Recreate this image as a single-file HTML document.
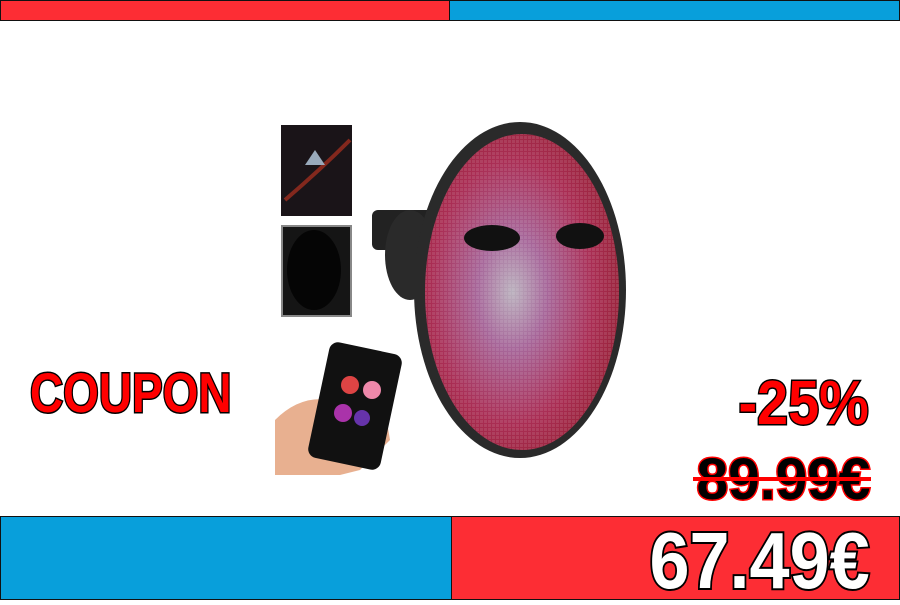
<!DOCTYPE html>
<html><head><style>
body{margin:0;width:900px;height:600px;background:#fff;position:relative;overflow:hidden;font-family:"Liberation Sans",sans-serif}
.b{position:absolute;box-sizing:border-box;border:1px solid #111}
.t{position:absolute;font-weight:bold;white-space:nowrap;line-height:1;paint-order:stroke fill}
</style></head><body>
<div class="b" style="left:0;top:0;width:450px;height:21px;background:#fd2d34"></div>
<div class="b" style="left:449px;top:0;width:451px;height:21px;background:#089fdb"></div>
<div class="b" style="left:0;top:516px;width:452px;height:84px;background:#089fdb"></div>
<div class="b" style="left:451px;top:516px;width:449px;height:84px;background:#fd2d34"></div>

<svg style="position:absolute;left:0;top:0" width="900" height="600">
<defs>
<pattern id="dots" width="4" height="4" patternUnits="userSpaceOnUse"><rect width="4" height="4" fill="#222" opacity=".2"/><rect width="3" height="3" fill="#fff" opacity=".1"/></pattern>
<radialGradient id="g" cx="0.45" cy="0.5" r="0.6"><stop offset="0" stop-color="#e0d4e4"/><stop offset="0.3" stop-color="#c878b8"/><stop offset="0.7" stop-color="#cc3060"/><stop offset="1" stop-color="#b02038"/></radialGradient>
</defs>
<rect x="281" y="125" width="71" height="91" fill="#1a1418"/>
<path d="M285 200 Q320 170 350 140" stroke="#b03020" stroke-width="4" fill="none" opacity=".7"/>
<path d="M305 165 L315 150 L325 165 Z" fill="#9ab"/>
<rect x="281" y="225" width="71" height="92" fill="#888"/>
<rect x="283" y="227" width="67" height="88" fill="#151515"/>
<ellipse cx="314" cy="270" rx="27" ry="40" fill="#050505"/>
<rect x="372" y="210" width="70" height="40" rx="6" fill="#222"/>
<ellipse cx="410" cy="255" rx="25" ry="45" fill="#2a2a2a"/>
<ellipse cx="520" cy="290" rx="106" ry="168" fill="#2a2a2a"/>
<ellipse cx="522" cy="292" rx="97" ry="158" fill="url(#g)"/>
<ellipse cx="522" cy="292" rx="97" ry="158" fill="url(#dots)"/>
<ellipse cx="492" cy="238" rx="28" ry="13" fill="#111"/>
<ellipse cx="580" cy="236" rx="24" ry="13" fill="#111"/>
<path d="M275 475 L275 420 Q300 395 330 400 L385 410 L390 440 L360 470 L340 475 Z" fill="#e8b090"/>
<rect x="318" y="347" width="74" height="118" rx="9" fill="#111" transform="rotate(12 355 406)"/>
<circle cx="350" cy="385" r="9" fill="#d44"/><circle cx="372" cy="390" r="9" fill="#e8a"/>
<circle cx="343" cy="413" r="9" fill="#a3a"/><circle cx="362" cy="418" r="8" fill="#63a"/>
</svg>

<div class="t" style="left:30px;top:365px;font-size:56px;color:#f00;-webkit-text-stroke:3px #000;transform:scaleX(.82);transform-origin:left">COUPON</div>
<div class="t" style="right:31px;top:373px;font-size:62px;color:#f00;-webkit-text-stroke:3px #000;transform:scaleX(.9);transform-origin:right">-25%</div>
<div class="t" style="right:30px;top:451px;font-size:58px;color:#000;-webkit-text-stroke:3px #f00;transform:scaleX(.98);transform-origin:right">89.99€</div>
<div style="position:absolute;left:693px;top:477px;width:178px;height:4px;background:#f00"></div>
<div class="t" style="right:30px;top:521px;font-size:80px;color:#fff;-webkit-text-stroke:4px #000;transform:scaleX(.9);transform-origin:right">67.49€</div>
</body></html>
